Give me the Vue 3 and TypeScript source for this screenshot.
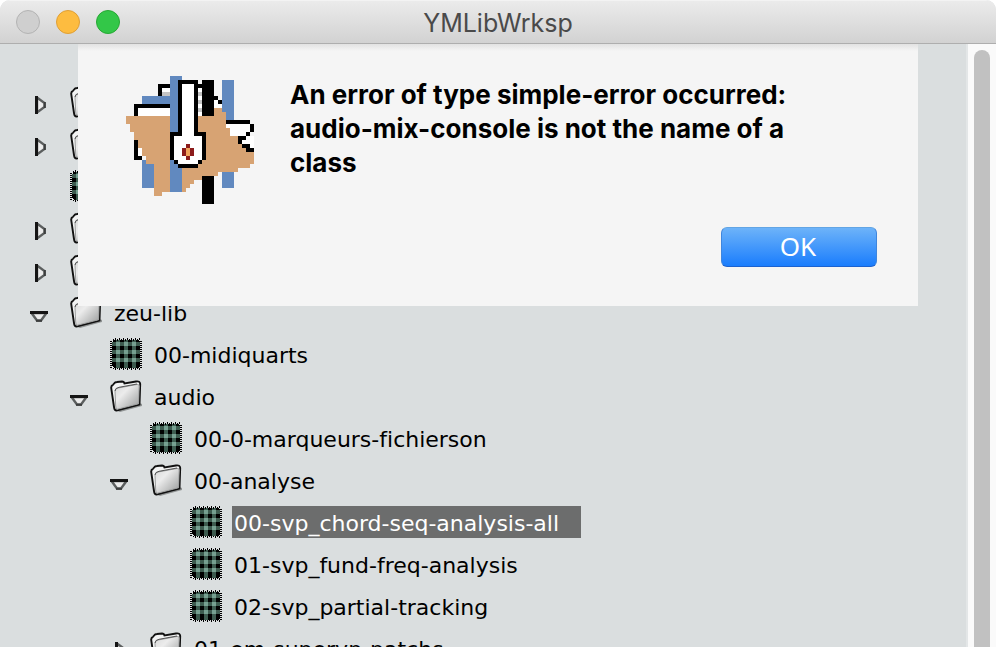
<script setup lang="ts">
interface Row {
  kind: 'folder' | 'patch'
  level: number
  label?: string
  open?: boolean
  selected?: boolean
}

const rows: Row[] = [
  { kind: 'folder', level: 0 },
  { kind: 'folder', level: 0 },
  { kind: 'patch', level: 0 },
  { kind: 'folder', level: 0 },
  { kind: 'folder', level: 0 },
  { kind: 'folder', level: 0, label: 'zeu-lib', open: true },
  { kind: 'patch', level: 1, label: '00-midiquarts' },
  { kind: 'folder', level: 1, label: 'audio', open: true },
  { kind: 'patch', level: 2, label: '00-0-marqueurs-fichierson' },
  { kind: 'folder', level: 2, label: '00-analyse', open: true },
  { kind: 'patch', level: 3, label: '00-svp_chord-seq-analysis-all', selected: true },
  { kind: 'patch', level: 3, label: '01-svp_fund-freq-analysis' },
  { kind: 'patch', level: 3, label: '02-svp_partial-tracking' },
  { kind: 'folder', level: 2, label: '01-om-supervp-patchs' },
]

const fringe = Array.from({ length: 14 }, (_, i) => 3 + i * 2)
const columns = [6, 14, 22]
const bands = [4, 12, 20]
</script>

<template>
  <div class="window">
    <header class="titlebar">
      <div class="lights">
        <button class="light close" type="button" aria-label="Close"></button>
        <button class="light minimize" type="button" aria-label="Minimize"></button>
        <button class="light zoom" type="button" aria-label="Zoom"></button>
      </div>
      <h1 class="title">YMLibWrksp</h1>
    </header>

    <main class="content">
      <ul class="tree">
        <li v-for="(row, i) in rows" :key="i" class="row" :class="'level-' + row.level">
          <span class="toggle-slot">
            <button v-if="row.kind === 'folder'" class="toggle" type="button" :aria-label="row.open ? 'Collapse' : 'Expand'">
              <svg v-if="row.open" class="arrow-open" width="18" height="11" viewBox="0 0 18 11">
                <path d="M1.500 2 H16.500 L11 9.500 H7 Z" fill="#ececec" stroke="#5c5f5f" stroke-width="2.400" />
                <path d="M0 1.500 H18" stroke="#151515" stroke-width="3" />
                <path d="M6 9.800 H12" stroke="#3c3e3e" stroke-width="2" />
              </svg>
              <svg v-else class="arrow-closed" width="11" height="18" viewBox="0 0 11 18">
                <path d="M2 1.500 L9.500 7 V11 L2 16.500 Z" fill="#ececec" stroke="#5c5f5f" stroke-width="2.400" />
                <path d="M1.500 0 V18" stroke="#151515" stroke-width="3" />
                <path d="M9.800 6 V12" stroke="#3c3e3e" stroke-width="2" />
              </svg>
            </button>
          </span>
          <svg v-if="row.kind === 'folder'" class="icon" width="32" height="32" viewBox="0 0 32 32">
            <path d="M5 30 L10 32 L32 26 V24 L27 22 Z" fill="#777b7b" opacity=".75" />
            <path d="M1.200 8 Q1 5.500 3 4.800 L4.500 3 Q5 2 7 2 L12 1.500 Q14 1.500 14.500 3.500 L26 1.500 Q30 0.800 30.200 4 L29.500 24.500 L6.500 30.500 Q4.500 30.500 4 27 Z" fill="#f2f3f3" stroke="#111" stroke-width="1.900" />
            <path d="M5 11 Q5 8.500 8 8 L27 4.500 Q29.300 4.200 29.200 6 L28.500 23.800 L7 29.300 Q5.800 28.500 5.700 26 Z" fill="url(#folder-face)" stroke="#9c9e9e" stroke-width="1" />
            <path d="M5 11 Q5 8 9 7.300 L27 4" fill="none" stroke="#555" stroke-width="1" />
          </svg>
          <svg v-else class="icon" width="32" height="32" viewBox="0 0 32 32" shape-rendering="crispEdges">
            <path d="M4 2 H28 L30 4 V28 L28 30 H4 L2 28 V4 Z" fill="#000" />
            <g fill="#3d5b4f">
              <rect v-for="b in bands" :key="'h' + b" x="2" :y="b" width="28" height="4" />
              <rect v-for="c in columns" :key="'v' + c" :x="c" y="2" width="4" height="28" />
            </g>
            <g v-for="y in bands" :key="'c' + y" fill="#76a091">
              <rect v-for="x in columns" :key="x" :x="x" :y="y" width="4" height="4" />
            </g>
            <g fill="#000">
              <template v-for="f in fringe" :key="f">
                <rect :x="f" :y="f % 4 === 1 ? 0 : 1" width="1" height="2" />
                <rect :x="f" y="30" width="1" :height="f % 4 === 1 ? 2 : 1" />
                <rect x="0" :y="f" width="2" height="1" />
                <rect x="30" :y="f" width="2" height="1" />
              </template>
            </g>
          </svg>
          <span v-if="row.label" class="label" :class="{ selected: row.selected }">{{ row.label }}</span>
        </li>
      </ul>
      <div class="scrollbar"><div class="thumb"></div></div>

      <section class="sheet" role="alertdialog" aria-labelledby="sheet-message">
        <svg class="app-icon" width="128" height="128" viewBox="0 0 32 32" shape-rendering="crispEdges">
          <path d="M4 5H11V7H4ZM4 21H7V28H4ZM11 0H14V29H11ZM24 1H27V28H24Z" fill="#6189bf" />
          <path d="M9 3H11V5H9ZM3 8H11V10H3ZM3 17H5V20H3ZM18 3H19V10H18ZM22 6H24V8H22Z" fill="#fff" />
          <path d="M9 4H11V5H9ZM18 4H19V5H18ZM18 6H19V7H18ZM18 8H19V9H18Z" fill="#c4c4c4" />
          <path d="M0 10H11V29H9V30H7V22H5V20H4V18H3V16H2V14H1V12H0Z" fill="#d7a373" />
          <path d="M18 10H22V8H24V9H25V11H25V13H26V15H28V17H29V18H30V19H32V22H31V23H28V24H23V25H22V26H17V27H16V28H15V29H14V14H18Z" fill="#d7a373" />
          <path d="M25 12H31V14H30V15H30V17H32V18H30V17H28V15H26V13H25ZM30 15H32V18H31V17H29V16H30Z" fill="#fff" />
          <path d="M8 2H11V3H9V5H8ZM2 7H11V8H3V10H2ZM2 16H3V20H4V21H2ZM19 1H22V5H23V6H24V7H23V6H22V10H19V3H18V2H19ZM19 25H22V32H19ZM25 11H31V12H32V14H31V15H30V16H29V17H31V18H32V19H30V18H29V17H28V15H30V14H31V12H25Z" fill="#000" />
          <path d="M13 1H18V14H20V21H19V22H18V23H13V22H12V21H11V14H13Z" fill="#000" />
          <path d="M14 2H17V15H19V21H18V22H13V21H12V15H14Z" fill="#fff" />
          <path d="M15 17H16V18H17V20H16V21H15V20H14V18H15Z" fill="#8c1c1c" />
          <path d="M15 18H16V20H15Z" fill="#f0a45c" />
        </svg>
        <div class="sheet-body">
          <p id="sheet-message" class="message">An error of type simple-error occurred: audio-mix-console is not the name of a class</p>
          <button class="ok" type="button">OK</button>
        </div>
      </section>
    </main>

    <svg class="defs" width="0" height="0" aria-hidden="true">
      <defs>
        <linearGradient id="folder-face" x1="0" y1="0" x2="1" y2="1">
          <stop offset="0" stop-color="#d8d9d9" />
          <stop offset=".35" stop-color="#ececec" />
          <stop offset=".6" stop-color="#cbcccc" />
          <stop offset="1" stop-color="#969898" />
        </linearGradient>
      </defs>
    </svg>
  </div>
</template>

<style>
body {
  margin: 0;
  background: #fff;
}
</style>

<style scoped>
.window {
  display: flex;
  flex-direction: column;
  height: 100vh;
  overflow: hidden;
  border-radius: 10px 10px 0 0;
  background: #dadedf;
}
.titlebar {
  display: grid;
  grid-template-columns: 1fr auto 1fr;
  align-items: center;
  flex: none;
  box-sizing: border-box;
  height: 44px;
  border-top: 1px solid #f3f3f3;
  border-bottom: 1px solid #aeaeae;
  background: linear-gradient(#ebebeb, #d2d2d2);
}
.lights {
  display: flex;
  gap: 16px;
  padding-left: 16px;
}
.light {
  width: 24px;
  height: 24px;
  padding: 0;
  border: 1px solid #b3b3b3;
  border-radius: 50%;
}
.close {
  background: #cfcfcf;
}
.minimize {
  border-color: #df9f35;
  background: #fdbc40;
}
.zoom {
  border-color: #27a834;
  background: #33c748;
}
.title {
  margin: 0;
  padding-top: 2px;
  color: #4a4a4a;
  font: 400 25px/40px Inter, sans-serif;
}
.content {
  position: relative;
  display: flex;
  flex: 1;
  min-height: 0;
}
.tree {
  flex: 1;
  margin: 0;
  padding: 39px 0 0;
  list-style: none;
}
.row {
  display: flex;
  align-items: center;
  height: 42px;
  padding-left: 30px;
}
.level-1 {
  padding-left: 70px;
}
.level-2 {
  padding-left: 110px;
}
.level-3 {
  padding-left: 150px;
}
.toggle-slot {
  flex: none;
  width: 40px;
}
.toggle {
  display: flex;
  align-items: center;
  width: 24px;
  height: 24px;
  padding: 0;
  border: 0;
  background: none;
}
.arrow-open {
  margin-top: 5px;
}
.arrow-closed {
  margin: 2px 0 0 5px;
}
.icon {
  flex: none;
  margin: 0 10px 4px 0;
}
.label {
  margin-bottom: 4px;
  padding: 5px 22px 1px 2px;
  color: #000;
  font: 22px/26px "DejaVu Sans", Verdana, sans-serif;
  font-variant-ligatures: none;
  white-space: nowrap;
}
.selected {
  background: #6c6d6d;
  color: #fff;
}
.scrollbar {
  box-sizing: border-box;
  width: 30px;
  padding: 6px 6px 0 6px;
  border-left: 2px solid #e3e6e7;
  background: #fafafa;
}
.thumb {
  height: 100%;
  width: 16px;
  border-radius: 8px 8px 0 0;
  background: #c1c1c1;
}
.sheet {
  position: absolute;
  top: 0;
  left: 78px;
  right: 78px;
  display: flex;
  gap: 36px;
  padding: 32px 41px 39px 48px;
  background: linear-gradient(#e2e2e2, #f5f5f5 7px);
}
.app-icon {
  flex: none;
}
.sheet-body {
  display: flex;
  flex: 1;
  flex-direction: column;
  align-items: flex-end;
  gap: 47px;
}
.message {
  align-self: stretch;
  margin: 2px 0 0;
  padding-right: 70px;
  color: #000;
  font: 700 26px/34px Inter, sans-serif;
}
.ok {
  width: 156px;
  height: 40px;
  padding: 0 2px 2px 0;
  border: 1px solid #3f86dd;
  border-top-color: #62a5e4;
  border-bottom-color: #1c62cf;
  border-radius: 6px;
  background: linear-gradient(#6db3f9, #1a7dfd);
  color: #fff;
  font: 26px/36px "Noto Sans", sans-serif;
}
.defs {
  position: absolute;
}
</style>
